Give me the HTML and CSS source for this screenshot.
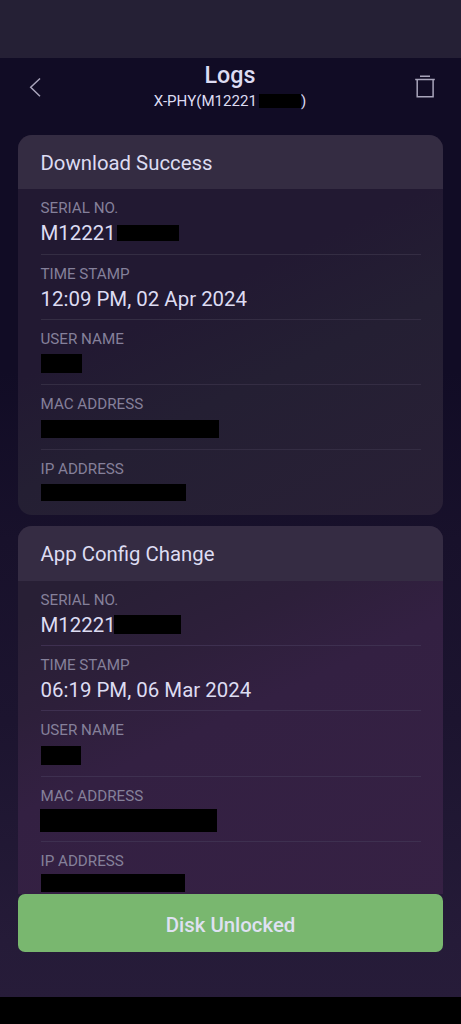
FILE: index.html
```html
<!DOCTYPE html>
<html lang="en">
<head>
<meta charset="utf-8">
<title>Logs</title>
<link rel="stylesheet" href="styles.css">
</head>
<body>
<div class="screen">
  <div class="status-bar"></div>
  <header class="top-bar">
    <svg class="icon" width="28" height="28" viewBox="0 0 28 28"><path d="M19 5.5 9.7 14.3 19 23.2"/></svg>
    <div class="heading">
      <h1 class="page-title">Logs</h1>
      <p class="device">X-PHY(M12221<span class="mask mask-device"></span>)</p>
    </div>
    <svg class="icon" width="28" height="28" viewBox="0 0 28 28"><path d="M9 3.2h10M4.2 6.6h19.6M6.2 6.6v17.1h15.9V6.6"/></svg>
  </header>
  <main class="logs">
    <section class="card">
      <h2 class="card-title">Download Success</h2>
      <dl class="fields">
        <div class="field"><dt>SERIAL NO.</dt><dd>M12221<span class="mask mask-serial"></span></dd></div>
        <div class="field"><dt>TIME STAMP</dt><dd>12:09 PM, 02 Apr 2024</dd></div>
        <div class="field"><dt>USER NAME</dt><dd><span class="mask mask-user"></span></dd></div>
        <div class="field"><dt>MAC ADDRESS</dt><dd><span class="mask mask-mac"></span></dd></div>
        <div class="field"><dt>IP ADDRESS</dt><dd><span class="mask mask-ip"></span></dd></div>
      </dl>
    </section>
    <section class="card card-config">
      <h2 class="card-title">App Config Change</h2>
      <dl class="fields">
        <div class="field"><dt>SERIAL NO.</dt><dd>M12221<span class="mask mask-serial"></span></dd></div>
        <div class="field"><dt>TIME STAMP</dt><dd>06:19 PM, 06 Mar 2024</dd></div>
        <div class="field"><dt>USER NAME</dt><dd><span class="mask mask-user"></span></dd></div>
        <div class="field"><dt>MAC ADDRESS</dt><dd><span class="mask mask-mac"></span></dd></div>
        <div class="field"><dt>IP ADDRESS</dt><dd><span class="mask mask-ip"></span></dd></div>
      </dl>
    </section>
  </main>
  <footer class="footer">
    <button class="unlock" type="button">Disk Unlocked</button>
  </footer>
  <div class="nav-bar"></div>
</div>
</body>
</html>
```

FILE: styles.css
```css
* { box-sizing: border-box; }

body {
  margin: 0;
  font-family: Roboto, "Liberation Sans", sans-serif;
  color: #dddcf2;
}

h1, h2, p, dl, dd { margin: 0; }

.screen {
  display: flex;
  flex-direction: column;
  height: 1024px;
  overflow: hidden;
  background: linear-gradient(180deg, #110c25 0, #110c25 370px, #18112b 540px, #1c142f 720px, #251b38 940px, #271c39 1000px);
}

.status-bar { flex: none; height: 58px; background: #252035; }

.top-bar {
  flex: none;
  display: flex;
  justify-content: space-between;
  height: 76.6px;
  padding: 15px 22px 0 21px;
}

.icon {
  fill: none;
  stroke: #a9a5bb;
  stroke-width: 1.5;
}

.heading {
  display: flex;
  flex-direction: column;
  align-items: center;
  margin-top: -12px;
}

.page-title { font-size: 23.3px; line-height: 29px; font-weight: 500; }

.device {
  display: flex;
  align-items: center;
  font-size: 15.1px;
  line-height: 22px;
}

.mask { flex: none; background: #000; }
.mask-device { width: 42px; height: 14px; margin-left: 2px; }
.mask-serial { width: 62px; height: 16px; margin: 0 0 1px 1.5px; }
.mask-user { width: 41px; height: 19px; }
.mask-mac { width: 178px; height: 18px; }
.mask-ip { width: 145px; height: 17px; margin-bottom: 3px; }

.logs {
  flex: 1;
  min-height: 0;
  overflow: hidden;
  padding: 0 18px;
}

.card {
  overflow: hidden;
  height: 380px;
  margin-bottom: 11.4px;
  border-radius: 14px;
  background: linear-gradient(155deg, #221932 0%, #221932 42%, #241f33 62%, #292036 100%);
}

.card-title {
  height: 54.7px;
  padding-left: 22.5px;
  background: #342c42;
  font-size: 20.35px;
  font-weight: 400;
  line-height: 56px;
}

.fields { padding: 0 22.5px; }

.field {
  height: 65.3px;
  padding-top: 10px;
  border-bottom: 1.4px solid #342d43;
}

.field:last-child { border-bottom: 0; }

dt { color: #85809a; font-size: 15.2px; line-height: 19px; }

dd {
  display: flex;
  align-items: center;
  height: 24px;
  margin-top: 3px;
  font-size: 20.45px;
  line-height: 24px;
}

.card-config { background: linear-gradient(155deg, #281f35 16%, #2d1f3a 34%, #332042 50%, #362144 100%); }
.card-config .card-title { background: #352c43; }
.card-config .field { border-color: #3e3050; }
.card-config .mask-serial { width: 67px; height: 19px; margin-left: -1.5px; }
.card-config .mask-user { width: 40px; }
.card-config .mask-mac { width: 177px; height: 23px; margin-left: -.5px; }
.card-config .mask-ip { width: 144px; height: 18px; margin-bottom: 5px; }

.footer { flex: none; height: 103px; padding: 0 18px; }

.unlock {
  display: block;
  width: 100%;
  height: 58px;
  border: 0;
  border-radius: 7px;
  background: #79b76f;
  color: #dfe1f2;
  font: 500 20.4px/60px Roboto, "Liberation Sans", sans-serif;
  padding: 1px 0 0;
}

.nav-bar { flex: none; height: 27px; background: #000; }
```
